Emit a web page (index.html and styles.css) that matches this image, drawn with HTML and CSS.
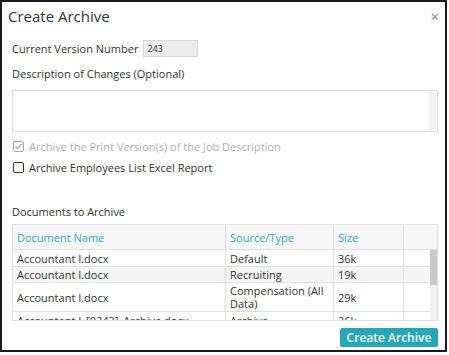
FILE: index.html
```html
<!DOCTYPE html>
<html lang="en">

<head>
    <meta charset="UTF-8">
    <meta name="viewport" content="width=device-width, initial-scale=1.0">
    <title>Create Archive</title>
    <link rel="stylesheet" href="styles.css">
</head>

<body>
    <div class="dialog">
        <div class="dialog-header">
            <h1>Create Archive</h1>
            <span class="close">&times;</span>
        </div>

        <div class="dialog-body">
            <div class="version-row">
                <label for="version">Current Version Number</label>
                <div class="version-box" id="version">243</div>
            </div>

            <div class="field-label">Description of Changes (Optional)</div>
            <div class="textarea">
                <div class="textarea-scroll"></div>
            </div>

            <div class="check-row first disabled">
                <span class="checkbox checked">
                    <svg width="9" height="9" viewBox="0 0 9 9"><path d="M1.5 4.5 L3.7 6.7 L7.6 2" fill="none" stroke="#a8a8a8" stroke-width="1.2"/></svg>
                </span>
                Archive the Print Version(s) of the Job Description
            </div>
            <div class="check-row">
                <span class="checkbox"></span>
                Archive Employees List Excel Report
            </div>

            <div class="docs-label">Documents to Archive</div>
            <div class="grid">
                <div class="grid-head">
                    <div class="col-name">Document Name</div>
                    <div class="col-type">Source/Type</div>
                    <div class="col-size">Size</div>
                    <div class="col-extra head-extra"></div>
                </div>
                <div class="grid-content">
                    <div class="grid-rows">
                        <div class="grid-row">
                            <div class="col-name">Accountant I.docx</div>
                            <div class="col-type">Default</div>
                            <div class="col-size">36k</div>
                            <div class="col-extra"></div>
                        </div>
                        <div class="grid-row alt">
                            <div class="col-name">Accountant I.docx</div>
                            <div class="col-type">Recruiting</div>
                            <div class="col-size">19k</div>
                            <div class="col-extra"></div>
                        </div>
                        <div class="grid-row tall">
                            <div class="col-name">Accountant I.docx</div>
                            <div class="col-type">Compensation (All Data)</div>
                            <div class="col-size">29k</div>
                            <div class="col-extra"></div>
                        </div>
                        <div class="grid-row">
                            <div class="col-name">Accountant I_[0243]_Archive.docx</div>
                            <div class="col-type">Archive</div>
                            <div class="col-size">36k</div>
                            <div class="col-extra"></div>
                        </div>
                    </div>
                    <div class="scrollbar">
                        <div class="thumb"></div>
                    </div>
                </div>
            </div>

            <div class="actions">
                <button class="primary-btn">Create Archive</button>
            </div>
        </div>
    </div>
</body>

</html>
```

FILE: styles.css
```css
body {
    margin: 0;
    padding: 0;
    background-color: #fff;
    font-family: "Open Sans", Arial, sans-serif;
    font-size: 11px;
    color: #333;
}

.dialog {
    width: 447px;
    height: 352px;
    box-sizing: border-box;
    border: 2px solid #1a1a1a;
    background-color: #fff;
    overflow: hidden;
}

.dialog-header {
    display: flex;
    justify-content: space-between;
    align-items: center;
    height: 28px;
    padding: 0 6px 0 6px;
}

.dialog-header h1 {
    margin: 0;
    font-size: 15px;
    font-weight: normal;
    color: #333;
}

.close {
    font-size: 15px;
    color: #888;
    cursor: pointer;
}

.dialog-body {
    padding: 10px 7px 0 10px;
}

.version-row {
    display: flex;
    align-items: center;
    gap: 5px;
}

.version-box {
    width: 55px;
    height: 17px;
    box-sizing: border-box;
    border: 1px solid #d8d8d8;
    background-color: #ececec;
    font-size: 9px;
    line-height: 15px;
    padding-left: 3px;
}

.field-label {
    margin-top: 8px;
    line-height: 18px;
}

.textarea {
    display: flex;
    justify-content: flex-end;
    height: 42px;
    margin-top: 7px;
    box-sizing: border-box;
    border: 1px solid #dcdcdc;
    padding: 1px;
}

.textarea-scroll {
    width: 7px;
    background-color: #f1f1f1;
}

.check-row {
    display: flex;
    align-items: center;
    gap: 5px;
    height: 21px;
    padding-left: 1px;
}

.check-row.first {
    margin-top: 4px;
}

.disabled {
    color: #b0b0b0;
}

.checkbox {
    display: inline-flex;
    align-items: center;
    justify-content: center;
    width: 11px;
    height: 11px;
    box-sizing: border-box;
    border: 1px solid #333;
    border-radius: 2px;
}

.checkbox.checked {
    border-color: #a8a8a8;
}

.docs-label {
    margin-top: 25px;
    line-height: 18px;
}

.grid {
    margin-top: 3px;
    border: 1px solid #e0e0e0;
    height: 97px;
    box-sizing: border-box;
    overflow: hidden;
}

.grid-head,
.grid-row {
    display: flex;
}

.grid-head {
    height: 25px;
    box-sizing: border-box;
    align-items: center;
    background-color: #f6f6f6;
    color: #2fadc7;
    border-bottom: 1px solid #e0e0e0;
}

.grid-head > div {
    height: 100%;
    display: flex;
    align-items: center;
}

.col-name,
.col-type,
.col-size,
.col-extra {
    box-sizing: border-box;
    padding-left: 4px;
    border-right: 1px solid #e0e0e0;
}

.col-name {
    width: 213px;
}

.col-type {
    width: 108px;
}

.col-size {
    width: 70px;
}

.col-extra {
    flex: 1;
    border-right: none;
}

.head-extra {
    width: 35px;
}

.grid-content {
    display: flex;
}

.grid-rows {
    flex: 1;
}

.grid-row {
    height: 17px;
    box-sizing: border-box;
    line-height: 15px;
    border-bottom: 1px solid #e0e0e0;
}

.grid-row > div {
    display: flex;
    align-items: center;
}

.grid-row.alt {
    height: 16px;
    background-color: #f5f5f5;
}

.grid-row.tall {
    height: 29px;
    line-height: 13px;
}

.scrollbar {
    width: 7px;
    height: 72px;
    background-color: #f1f1f1;
}

.thumb {
    height: 35px;
    background-color: #c9c9c9;
}

.actions {
    display: flex;
    justify-content: flex-end;
    margin-top: 7px;
}

.primary-btn {
    width: 98px;
    height: 19px;
    border: none;
    border-radius: 2px;
    background-color: #22a8b8;
    color: #fff;
    font-family: "Open Sans", Arial, sans-serif;
    font-size: 12px;
    font-weight: 600;
    padding: 0;
}
```
